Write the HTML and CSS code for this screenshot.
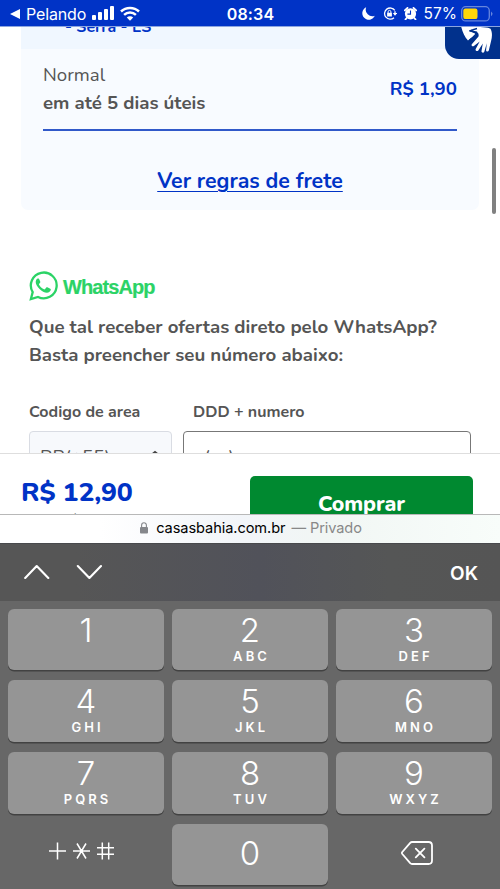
FILE: index.html
```html
<!DOCTYPE html>
<html lang="pt-BR">
<head>
<meta charset="utf-8">
<title>Casas Bahia</title>
<link rel="stylesheet" href="styles.css">
</head>
<body>
<div class="screen">
  <header class="status">
    <div class="status-left">
      <svg width="10" height="10" viewBox="0 0 10 10"><path d="M0 5 10 0v10z" fill="#fff"/></svg>
      <span class="back">Pelando</span>
      <svg class="signal" width="22" height="14" viewBox="0 0 22 14" fill="#fff"><rect y="9" width="4" height="5" rx="1"/><rect x="6" y="6" width="4" height="8" rx="1"/><rect x="12" y="3" width="4" height="11" rx="1"/><rect x="18" width="4" height="14" rx="1"/></svg>
      <svg class="wifi" width="20" height="15" viewBox="0 0 20 15" fill="none" stroke="#fff" stroke-width="2.5"><path d="M1 5.5a13 13 0 0 1 18 0M4.1 8.9a8.6 8.6 0 0 1 11.8 0"/><path d="M10 14.7 6.8 11.5a4.6 4.6 0 0 1 6.4 0z" fill="#fff" stroke="none"/></svg>
    </div>
    <span class="clock">08:34</span>
    <div class="status-right">
      <svg width="13" height="13" viewBox="0 0 13 13"><path d="M4.2.3a6.5 6.5 0 1 0 8.6 8.5A6.6 6.6 0 0 1 4.2.3z" fill="#fff"/></svg>
      <svg class="lock-rot" width="14" height="13" viewBox="0 0 14 13" fill="none" stroke="#fff" stroke-width="1.3"><path d="M11.8 3.4A5.6 5.6 0 1 0 11 10.7M12 4.2v3"/><path d="M9.8 6h4.4L12 8.7z" fill="#fff" stroke="none"/><rect x="4.1" y="5.8" width="4.8" height="3.7" fill="#fff" stroke="none"/><path d="M5.1 6V4.8a1.4 1.4 0 0 1 2.8 0V6" stroke-width="1"/></svg>
      <svg class="alarm" width="13" height="13" viewBox="0 0 13 13"><circle cx="6.5" cy="6.8" r="5.6" fill="#fff"/><path d="M.8 3.4 3.5.9M12.2 3.4 9.5.9M2.7 11 1.5 12.4M10.3 11l1.2 1.4" stroke="#fff" stroke-width="1.8" stroke-linecap="round"/><path d="M6.5 3.4v3.7H3.4" fill="none" stroke="#0033c6" stroke-width="1.1"/></svg>
      <span class="percent">57%</span>
      <svg class="battery" width="32" height="16" viewBox="0 0 32 16"><rect x=".7" y=".7" width="27.6" height="14.2" rx="4" fill="none" stroke="#6686dd" stroke-width="1.3"/><rect x="2.3" y="2.5" width="14.2" height="10.6" rx="2.2" fill="#ffd60a"/><path d="M30 5.5q3 2.3 0 4.8z" fill="#6686dd"/></svg>
    </div>
  </header>

  <main class="page">
    <section class="shipping">
      <div class="address"><span>- Serra - ES</span></div>
      <div class="option">
        <div class="option-text"><span class="kind">Normal</span><strong class="eta">em até 5 dias úteis</strong></div>
        <strong class="fee">R$ 1,90</strong>
      </div>
      <a class="rules">Ver regras de frete</a>
    </section>
    <section class="whats">
      <div class="brand">
        <svg width="30" height="30" viewBox="0 0 30 30"><path d="M1.900 28 3.700 21.100A12.900 12.900 0 1 1 9 26z" fill="none" stroke="#2bd366" stroke-width="2.300"/><path d="M10.200 8.300c-.4-.7-.8-.7-1.300-.7-1 .1-2.200 1.600-2.200 3.400 0 4.400 6.600 10.700 11.200 10.700 2 0 3.800-1.400 3.900-2.900 0-.5 0-.9-.5-1.100l-2.900-1.400c-.5-.2-.8-.1-1.100.3l-1.200 1.500c-.3.3-.6.4-1.100.2-2-.9-3.800-2.500-4.900-4.500-.2-.4-.2-.7.1-1l.9-1.100c.3-.4.3-.7.1-1.100z" fill="#2bd366"/></svg>
        <span class="wordmark">WhatsApp</span>
      </div>
      <p class="pitch">Que tal receber ofertas direto pelo WhatsApp?<br>Basta preencher seu número abaixo:</p>
      <div class="fields">
        <label class="field area"><span>Codigo de area</span><div class="box select"><span>BR(+55)</span><svg width="12" height="10" viewBox="0 0 12 10"><path d="m1 6 5-4 5 4" fill="none" stroke="#444" stroke-width="2"/></svg></div></label>
        <label class="field phone"><span>DDD + numero</span><div class="box"><span>(__)</span></div></label>
      </div>
    </section>
    <div class="libras">
      <svg width="34" height="34" viewBox="0 0 34 34"><path d="M1 0C2.500 6 4.500 11 8 14.500c2.500-2.200 5.400-3.200 7.500-5.500l-.5-1.500L9 5l7-3.500L19 0z" fill="#fff"/><path d="M16 0c5 2 10 .4 14.500 2.800 2 3.400 1.700 8 .6 12.200l-2.300 9.500c-.6 1.700-3 1.100-2.700-.6l.7-6.600-2.500 8.400c-.6 1.600-3.200 1.100-2.800-.8l1.300-7.500-4.500 7c-1.100 1.500-3.300.3-2.600-1.400l4-7.600-5.800 4.600c-1.600 1.100-3.100-.8-1.900-2.100l6.500-7.500c.5-2-.2-3.600-1.500-4.200L10.500 5z" fill="#fff"/><path d="M17 2.500 9.500 4.800l7 1.300c1 2.500-3.800 4.900-7.500 8.600" fill="none" stroke="#01318c" stroke-width="1.400"/></svg>
    </div>
    <div class="scrollbar"></div>
  </main>

  <section class="buybar">
    <div class="total"><strong>R$ 12,90</strong><span>à vista</span></div>
    <button class="buy"><span>Comprar</span></button>
  </section>

  <div class="urlbar">
    <svg width="8" height="12" viewBox="0 0 8 12"><rect y="5" width="8" height="6.5" rx="1" fill="#85878b"/><path d="M1.6 5.4V3.2a2.4 2.4 0 0 1 4.8 0v2.2" fill="none" stroke="#85878b" stroke-width="1.1"/></svg>
    <span class="host">casasbahia.com.br</span><span class="private">— Privado</span>
  </div>

  <div class="accessory">
    <svg width="78" height="16" viewBox="0 0 78 16" fill="none" stroke="#fff" stroke-width="2.1" stroke-linecap="round" stroke-linejoin="round"><path d="M1.2 14 12.7 2l11.6 12M53.8 2l11.6 12L77 2"/></svg>
    <span>OK</span>
  </div>

  <div class="keypad">
    <div class="key"><b>1</b></div><div class="key"><b>2</b><i>ABC</i></div><div class="key"><b>3</b><i>DEF</i></div>
    <div class="key"><b>4</b><i>GHI</i></div><div class="key"><b>5</b><i>JKL</i></div><div class="key"><b>6</b><i>MNO</i></div>
    <div class="key"><b>7</b><i>PQRS</i></div><div class="key"><b>8</b><i>TUV</i></div><div class="key"><b>9</b><i>WXYZ</i></div>
    <div class="plain symbols"><svg width="66" height="18" viewBox="0 0 66 18" fill="none" stroke="#fff" stroke-width="1.5"><path d="M0 9h17M8.500.5v17M24 9h17M28 1.500l9 15M37 1.500l-9 15M48 5.800h17M48 12.200h17M53.300.5v17M59.700.5v17"/></svg></div>
    <div class="key zero"><b>0</b></div>
    <div class="plain erase"><svg width="32" height="24" viewBox="0 0 32 24" fill="none" stroke="#fff" stroke-width="1.8" stroke-linejoin="round" stroke-linecap="round"><path d="M11 1h16.500Q31 1 31 4.500v15q0 3.500-3.500 3.500H11q-1 0-1.800-.8L1.300 13q-.8-1 0-2L9.200 1.800Q10 1 11 1zM14.800 7.600l8.600 8.800M23.400 7.600l-8.600 8.800"/></svg></div>
  </div>
</div>
</body>
</html>
```

FILE: styles.css
```css
* { box-sizing: border-box; }
body { margin: 0; font-family: Nunito, "Noto Sans", sans-serif; color: #555; }
.screen { width: 500px; height: 889px; display: flex; flex-direction: column; overflow: hidden; background: #fff; }
svg { display: block; flex: none; }
span, strong { white-space: nowrap; }

.status { height: 26px; flex: none; display: grid; grid-template-columns: 1fr auto 1fr; align-items: center; background: #0033c6; color: #fff; font-family: Inter, sans-serif; padding: 1px 7px 0 10px; }
.status-left, .status-right { display: flex; align-items: center; }
.status-right { justify-content: flex-end; }
.back { font-size: 16px; margin-left: 6px; letter-spacing: -.15px; }
.signal { margin-left: 6px; margin-top: -2px; }
.wifi { margin-left: 6px; }
.clock { font-size: 16px; font-weight: 600; letter-spacing: .15px; margin-right: 2px; }
.lock-rot { margin-left: 8px; }
.alarm { margin-left: 7px; }
.percent { font-size: 15.5px; margin-left: 7px; }
.battery { margin-left: 4px; }

.page { height: 427px; flex: none; overflow: hidden; position: relative; border-top: 1px solid #8ca5df; }
.shipping { margin: 0 21px; height: 183px; background: #f8fbff; border-radius: 0 0 7px 7px; display: flex; flex-direction: column; }
.address { height: 22px; flex: none; background: #f0f7ff; overflow: hidden; padding-left: 44px; color: #0033c6; font-weight: 700; font-size: 16px; line-height: 20px; }
.address span { display: block; margin-top: -10px; }
.option { margin: 0 22px; height: 82px; flex: none; border-bottom: 2px solid #3159c9; display: flex; justify-content: space-between; padding-top: 12px; }
.option-text { display: flex; flex-direction: column; font-size: 18.67px; line-height: 28px; }
.eta { font-weight: 700; }
.fee { color: #0033c6; font-size: 18.67px; font-weight: 700; line-height: 56px; }
.rules { align-self: center; margin-top: 36px; color: #0033c6; font-size: 21.33px; line-height: 28px; font-weight: 700; text-decoration: underline; text-decoration-thickness: 1.3px; text-underline-offset: 3px; }
.whats { padding: 60px 29px 0; }
.brand { display: flex; align-items: center; gap: 4px; height: 32px; }
.wordmark { font: bold 20px "Liberation Sans", sans-serif; letter-spacing: -.9px; color: #2bd366; padding-top: 2px; -webkit-text-stroke: .2px #2bd366; }
.pitch { margin: 11px 0 0; font-size: 18.67px; line-height: 28px; font-weight: 700; white-space: nowrap; }
.fields { display: flex; gap: 11px; margin-top: 32px; }
.field { font-size: 16px; line-height: 22px; font-weight: 700; }
.field > span { display: block; }
.area { width: 143px; }
.phone { width: 288px; }
.phone > span { padding-left: 10px; }
.box { margin-top: 8px; height: 50px; border: 1px solid #777; border-radius: 4px; padding: 14px 20px; font-weight: 400; font-size: 18.67px; }
.select { display: flex; justify-content: space-between; background: #f7f9fc; border-color: #d9dce3; padding: 14px 10px; }
.select svg { margin-top: 4px; }
.libras { position: absolute; right: 0; top: -1px; width: 55px; height: 33px; border-radius: 0 0 0 14px; background: #01318c; padding-left: 15px; overflow: hidden; }
.scrollbar { position: absolute; right: 4px; top: 121px; width: 4px; height: 66px; border-radius: 2px; background: #808080; }

.buybar { height: 61px; flex: none; overflow: hidden; border-top: 1px solid #dedede; display: flex; justify-content: space-between; padding: 22px 27px 0 21px; }
.total { display: flex; flex-direction: column; }
.total strong { color: #0033c6; font-size: 26.67px; line-height: 33px; font-weight: 800; letter-spacing: -.15px; }
.total span { font-size: 13px; line-height: 16px; padding: 3px 0 0 52px; }
.buy { width: 223px; height: 56px; border: 0; border-radius: 5px; background: #008930; color: #fff; font: 800 21.33px/54px Nunito, "Noto Sans", sans-serif; letter-spacing: -.1px; padding: 0; }

.urlbar { height: 29px; flex: none; display: flex; align-items: center; justify-content: center; border-top: 1px solid #b8b8b8; background: linear-gradient(90deg, #fff 20%, #f2f5f9 48%, #f1f6f4 65%, #f8fdfa); font: 14.6px Inter, sans-serif; color: #000; padding: 0 0 2px 2px; }
.host { margin-left: 8px; letter-spacing: -.08px; }
.private { color: #888; margin-left: 6px; letter-spacing: -.1px; }

.accessory { height: 58px; flex: none; display: flex; align-items: center; justify-content: space-between; padding: 0 22px 2px 24px; background: linear-gradient(90deg, #565656 15%, #51525a 52%, #555656 78%, #555); color: #fff; font: 600 19px Inter, sans-serif; border-top: 1px solid #48494c; }
.accessory span { padding-top: 3px; }
.keypad { flex: 1; display: grid; grid-template-columns: repeat(3, 156px); grid-template-rows: 61px 62px 62px 61px; row-gap: 10px; column-gap: 8px; padding: 8px; background: #676767; color: #fff; font-family: Inter, sans-serif; }
.key { background: #959595; border-radius: 6px; box-shadow: 0 1.5px 0 #424242; display: flex; flex-direction: column; align-items: center; }
.key b { font-size: 33px; font-weight: 350; line-height: 38px; margin-top: 2px; }
.key i { font-size: 13px; font-style: normal; font-weight: 600; line-height: 14px; letter-spacing: 3.1px; margin-right: -3.1px; }
.zero b { margin-top: 10px; }
.plain { display: flex; align-items: center; justify-content: center; }
.symbols { padding: 0 9px 8px 0; }
.erase { padding: 0 0 3px 6px; }
```
